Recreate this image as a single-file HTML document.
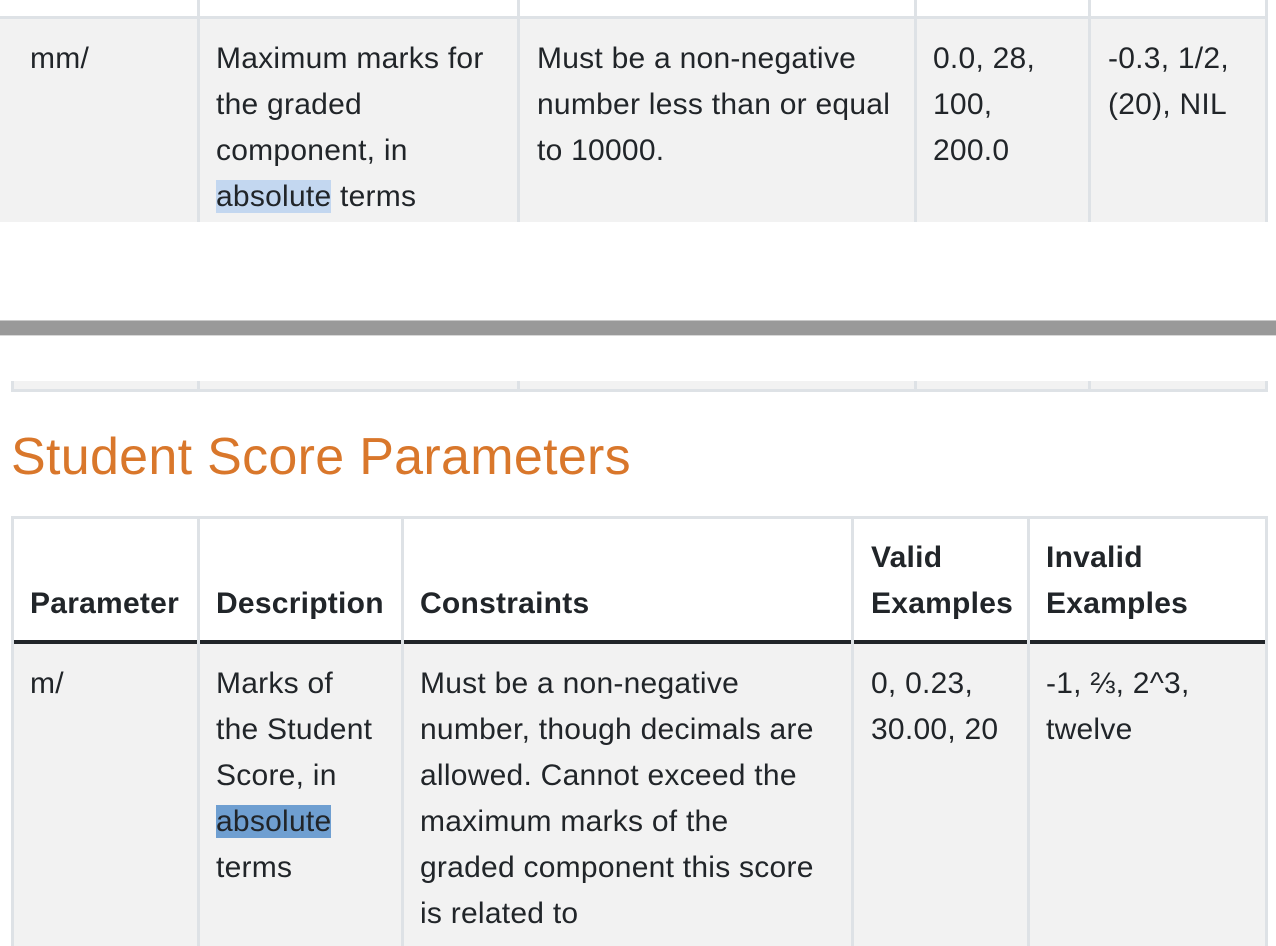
<!DOCTYPE html>
<html><head><meta charset="utf-8"><style>
body{margin:0;width:1276px;height:946px;overflow:hidden;background:#fff;position:relative;font-family:"Liberation Sans",sans-serif;color:#212529;font-size:30px;letter-spacing:0.25px;line-height:46px}
div{position:absolute;box-sizing:border-box}
.c{background:#f2f2f2}
.v{background:#dee2e6;width:3px}
.h{background:#dee2e6;height:3px}
.t{white-space:nowrap}
b{font-weight:bold}
</style></head><body>
<!-- top table -->
<div class="c" style="left:0;top:19px;width:1266px;height:203px"></div>
<div class="h" style="left:0;top:16px;width:1268px"></div>
<div class="v" style="left:197px;top:0;height:222px"></div>
<div class="v" style="left:517px;top:0;height:222px"></div>
<div class="v" style="left:914px;top:0;height:222px"></div>
<div class="v" style="left:1088px;top:0;height:222px"></div>
<div class="v" style="left:1265px;top:0;height:222px"></div>
<div class="t" style="left:30px;top:36px">mm/</div>
<div class="t" style="left:216px;top:36px">Maximum marks for<br>the graded<br>component, in<br><span style="background:#c3d7f0">absolute</span> terms</div>
<div class="t" style="left:537px;top:36px">Must be a non-negative<br>number less than or equal<br>to 10000.</div>
<div class="t" style="left:933px;top:36px">0.0, 28,<br>100,<br>200.0</div>
<div class="t" style="left:1108px;top:36px">-0.3, 1/2,<br>(20), NIL</div>
<!-- separator bar -->
<div style="left:0;top:320px;width:1276px;height:16px;background:#999;border-top:1px solid #c8c8c8;border-bottom:1px solid #d8d8d8"></div>
<!-- strip -->
<div class="c" style="left:11px;top:381px;width:1255px;height:9px"></div>
<div class="h" style="left:11px;top:389px;width:1257px"></div>
<div class="v" style="left:11px;top:381px;height:11px"></div>
<div class="v" style="left:197px;top:381px;height:11px"></div>
<div class="v" style="left:517px;top:381px;height:11px"></div>
<div class="v" style="left:914px;top:381px;height:11px"></div>
<div class="v" style="left:1088px;top:381px;height:11px"></div>
<div class="v" style="left:1265px;top:381px;height:11px"></div>
<!-- heading -->
<div class="t" style="left:11px;top:424px;font-size:52px;letter-spacing:0.3px;line-height:66px;color:#d9772b">Student Score Parameters</div>
<!-- bottom table -->
<div class="c" style="left:11px;top:644px;width:1255px;height:302px"></div>
<div class="h" style="left:11px;top:516px;width:1257px"></div>
<div style="left:11px;top:640px;width:1257px;height:4px;background:#212529"></div>
<div class="v" style="left:11px;top:516px;height:430px"></div>
<div class="v" style="left:197px;top:516px;height:430px"></div>
<div class="v" style="left:401px;top:516px;height:430px"></div>
<div class="v" style="left:851px;top:516px;height:430px"></div>
<div class="v" style="left:1027px;top:516px;height:430px"></div>
<div class="v" style="left:1265px;top:516px;height:430px"></div>
<div class="t" style="left:30px;top:581px"><b>Parameter</b></div>
<div class="t" style="left:216px;top:581px"><b>Description</b></div>
<div class="t" style="left:420px;top:581px"><b>Constraints</b></div>
<div class="t" style="left:871px;top:535px"><b>Valid<br>Examples</b></div>
<div class="t" style="left:1046px;top:535px"><b>Invalid<br>Examples</b></div>
<div class="t" style="left:30px;top:661px">m/</div>
<div class="t" style="left:216px;top:661px">Marks of<br>the Student<br>Score, in<br><span style="background:#6f9fd1">absolute</span><br>terms</div>
<div class="t" style="left:420px;top:661px">Must be a non-negative<br>number, though decimals are<br>allowed. Cannot exceed the<br>maximum marks of the<br>graded component this score<br>is related to</div>
<div class="t" style="left:871px;top:661px">0, 0.23,<br>30.00, 20</div>
<div class="t" style="left:1046px;top:661px">-1, ⅔, 2^3,<br>twelve</div>
</body></html>
